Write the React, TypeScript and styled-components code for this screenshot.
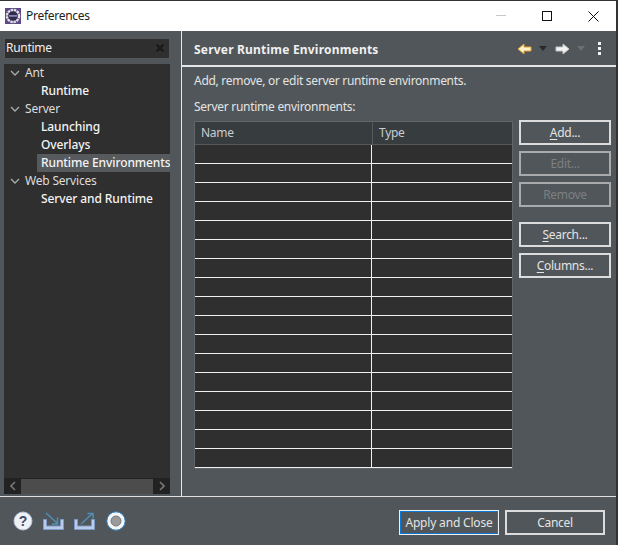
import React from "react";
import styled, { createGlobalStyle } from "styled-components";

const Global = createGlobalStyle`
  html, body { margin: 0; padding: 0; background: #2b2b2b; }
  #root { width: 618px; height: 545px; overflow: hidden; }
  * { box-sizing: border-box; }
`;

const Win = styled.div`
  width: 618px; height: 545px; display: flex; flex-direction: column;
  background: #505659; color: #eeeeee;
  border-top: 1px solid #333; border-right: 2px solid #333;
  font: 12px/16px "Noto Sans", "Open Sans", sans-serif;
  letter-spacing: -0.28px;
`;
const TitleBar = styled.div`
  height: 30px; flex: none; background: #fff; color: #222; display: flex; align-items: center;
  padding-left: 5px; font-size: 12px;
`;
const AppIcon = styled.svg` width: 16px; height: 16px; margin-right: 5px; `;
const TitleText = styled.span` flex: 1; `;
const WinBtn = styled.div` width: 46px; height: 30px; display: flex; align-items: center; justify-content: center; `;
const Main = styled.div` flex: 1; display: flex; min-height: 0; `;
const Left = styled.div`
  width: 181px; flex: none; padding: 7px 11px 0 4px; display: flex; flex-direction: column; gap: 5px;
`;
const Search = styled.div`
  height: 21px; flex: none; background: #2f2f2f; border: 1px solid #55595c; display: flex; align-items: center;
  justify-content: space-between; padding: 0 5px 2px 1px; font-size: 12px; color: #eee;
`;
const Tree = styled.div`
  flex: 1; background: #2f2f2f; display: flex; flex-direction: column; min-height: 0; margin-bottom: 2px;
`;
const TreeList = styled.div` flex: 1; `;
const Row = styled.div<{ $child?: boolean }>`
  height: 18px; line-height: 17px; display: flex; align-items: center; white-space: nowrap; overflow: hidden;
  padding-left: ${p => (p.$child ? 33 : 6)}px;
  color: ${p => (p.$child ? "#f4f4f4" : "#dddddd")};
  font-weight: ${p => (p.$child ? 500 : 400)};
  letter-spacing: ${p => (p.$child ? "-0.1px" : "-0.2px")};
`;
const TopLabel = styled.span` height: 18px; line-height: 17px; `;
const Label = styled.span<{ $sel?: boolean }>`
  flex: 1; padding-left: 4px; height: 18px; line-height: 17px;
  background: ${p => (p.$sel ? "#565a5c" : "transparent")};
`;
const Chevron = styled.svg` width: 10px; height: 8px; margin-right: 5px; flex: none; `;
const HScroll = styled.div` height: 16px; flex: none; background: #222; display: flex; align-items: center; `;
const ScrollEnd = styled.div` width: 17px; height: 16px; display: flex; align-items: center; justify-content: center; flex: none; `;
const ScrollThumb = styled.div` flex: 1; height: 15px; background: #4c4c4c; `;

const Right = styled.div`
  flex: 1; border-left: 1px solid #e6e6e6; display: flex; flex-direction: column; min-width: 0;
`;
const Header = styled.div`
  height: 36px; flex: none; border-bottom: 2px solid #e6e6e6; display: flex; align-items: center;
  padding-left: 12px;
`;
const HeaderTitle = styled.span` flex: 1; font-weight: 700; font-size: 12px; color: #f0f0f0; letter-spacing: 0.2px; padding-top: 3px; `;
const Tools = styled.div` display: flex; align-items: center; padding-right: 14px; padding-top: 1px; `;
const Dots = styled.svg` margin-left: 5px; `;
const Content = styled.div` flex: 1; padding: 6px 5px 0 12px; min-height: 0; `;
const Line = styled.div` height: 16px; color: #e4e4e4; margin-bottom: 10px; `;
const Line2 = styled(Line)` margin-bottom: 6px; `;
const Body = styled.div` display: flex; gap: 6px; align-items: flex-start; `;

const Table = styled.div`
  width: 319px; height: 348px; border: 1px solid #626669; background: #2f2f2f; display: flex; flex-direction: column;
`;
const Head = styled.div`
  height: 23px; flex: none; background: #373c3f; display: grid; grid-template-columns: 177px 1fr;
  border-bottom: 1px solid #55595c;
`;
const HeadCell = styled.div`
  padding: 3px 0 0 6px; color: #c9cdd0; & + & { border-left: 1px solid #55595c; }
`;
const TRow = styled.div`
  height: 19px; flex: none; display: grid; grid-template-columns: 176px 1fr; border-bottom: 1px solid #f0f0f0;
`;
const TCell = styled.div` & + & { border-left: 1px solid #f0f0f0; } `;

const Buttons = styled.div` width: 92px; flex: none; display: flex; flex-direction: column; gap: 6px; margin-top: -1px; `;
const Btn = styled.div<{ $off?: boolean; $gap?: boolean; $def?: boolean; $w?: number }>`
  height: 25px; width: ${p => (p.$w ? `${p.$w}px` : "auto")}; display: flex; align-items: center; justify-content: center;
  border: 2px solid ${p => (p.$off ? "#a8aaab" : "#dcdcdc")};
  color: ${p => (p.$off ? "#7d8184" : "#e4e4e4")};
  margin-top: ${p => (p.$gap ? 9 : 0)}px;
  ${p => p.$def && "border: 1px solid #f0f0f0; box-shadow: inset 0 0 0 1px #0a78d4; letter-spacing: -0.18px;"}
`;
const U = styled.span` text-decoration: underline; text-underline-offset: 2px; `;

const Footer = styled.div`
  height: 49px; flex: none; border-top: 1px solid #e0e0e0; display: flex; align-items: center; padding: 3px 11px 0 13px; gap: 6px;
`;
const FootIcons = styled.div` flex: 1; display: flex; align-items: center; gap: 9px; padding-bottom: 3px; `;
const HelpIcon = styled.svg` margin-right: 1px; `;
const StopIcon = styled.svg` margin-left: 1px; `;

const Chev = () => (
  <Chevron viewBox="0 0 10 8"><path d="M1 2l4 4 4-4" fill="none" stroke="#a8acae" strokeWidth="1.3" /></Chevron>
);
const DropSvg = styled.svg` margin: 0 8px 0 7px; `;
const Drop = ({ c }: { c: string }) => (
  <DropSvg width="8" height="5" viewBox="0 0 8 5"><path d="M0 0h8L4 5z" fill={c} /></DropSvg>
);
const Arrow = ({ left, fill, stroke }: { left?: boolean; fill: string; stroke: string }) => (
  <svg width="15" height="12" viewBox="0 0 15 12">
    <path d={left ? "M1 6l6-5v3h7v4H7v3z" : "M14 6L8 1v3H1v4h7v3z"} fill={fill} stroke={stroke} strokeWidth="1" />
  </svg>
);
const Transfer = ({ out }: { out?: boolean }) => (
  <svg width="22" height="19" viewBox="0 0 22 19">
    <path d="M.5 7.5v10h20v-10h-3v6.5h-14V7.5z" fill="#b9cbe8" stroke="#7f9cc8" strokeWidth="1" />
    {out
      ? <path d="M7 12L18 2M13.5 1.5h5.5v5" fill="none" stroke="#4f8fb5" strokeWidth="1.5" />
      : <path d="M3 1l11 10M14.5 5.5v6.5H9" fill="none" stroke="#4f8fb5" strokeWidth="1.5" />}
  </svg>
);

const rows = Array.from({ length: 17 });

export default function App() {
  return (
    <Win>
      <Global />
      <TitleBar>
        <AppIcon viewBox="0 0 16 16">
          <rect width="16" height="16" fill="#5c4a86" />
          <circle cx="8" cy="8" r="6" fill="none" stroke="#e4e4e4" strokeWidth="2.4" strokeDasharray="2.4 .75" />
          <circle cx="8" cy="8" r="4.6" fill="#2f2b4a" />
          <rect x="4" y="7.2" width="8" height="1.4" fill="#a898d0" />
        </AppIcon>
        <TitleText>Preferences</TitleText>
        <WinBtn>
          <svg width="10" height="2" viewBox="0 0 10 2"><rect width="10" height="1" fill="#c8c8c8" /></svg>
        </WinBtn>
        <WinBtn>
          <svg width="10" height="10" viewBox="0 0 10 10"><rect x=".5" y=".5" width="9" height="9" fill="none" stroke="#111" /></svg>
        </WinBtn>
        <WinBtn>
          <svg width="11" height="11" viewBox="0 0 11 11"><path d="M.5.5l10 10M10.5.5l-10 10" stroke="#111" fill="none" /></svg>
        </WinBtn>
      </TitleBar>
      <Main>
        <Left>
          <Search>
            <span>Runtime</span>
            <svg width="8" height="8" viewBox="0 0 8 8"><path d="M.5.5l7 7M7.5.5l-7 7" stroke="#151515" strokeWidth="1.8" /></svg>
          </Search>
          <Tree>
            <TreeList>
              <Row><Chev /><TopLabel>Ant</TopLabel></Row>
              <Row $child><Label>Runtime</Label></Row>
              <Row><Chev /><TopLabel>Server</TopLabel></Row>
              <Row $child><Label>Launching</Label></Row>
              <Row $child><Label>Overlays</Label></Row>
              <Row $child><Label $sel>Runtime Environments</Label></Row>
              <Row><Chev /><TopLabel>Web Services</TopLabel></Row>
              <Row $child><Label>Server and Runtime</Label></Row>
            </TreeList>
            <HScroll>
              <ScrollEnd>
                <svg width="6" height="10" viewBox="0 0 6 10"><path d="M5 1L1 5l4 4" fill="none" stroke="#777" strokeWidth="1.6" /></svg>
              </ScrollEnd>
              <ScrollThumb />
              <ScrollEnd>
                <svg width="6" height="10" viewBox="0 0 6 10"><path d="M1 1l4 4-4 4" fill="none" stroke="#777" strokeWidth="1.6" /></svg>
              </ScrollEnd>
            </HScroll>
          </Tree>
        </Left>
        <Right>
          <Header>
            <HeaderTitle>Server Runtime Environments</HeaderTitle>
            <Tools>
              <Arrow left fill="#fff3d0" stroke="#e0a030" />
              <Drop c="#2a2a2a" />
              <Arrow fill="#f4f4f4" stroke="#c8c8c8" />
              <Drop c="#6b6f72" />
              <Dots width="4" height="14" viewBox="0 0 4 14">
                <rect x="0" y="0" width="3" height="3" fill="#f4f4f4" /><rect x="0" y="5" width="3" height="3" fill="#f4f4f4" /><rect x="0" y="10" width="3" height="3" fill="#f4f4f4" />
              </Dots>
            </Tools>
          </Header>
          <Content>
            <Line>Add, remove, or edit server runtime environments.</Line>
            <Line2>Server runtime environments:</Line2>
            <Body>
              <Table>
                <Head><HeadCell>Name</HeadCell><HeadCell>Type</HeadCell></Head>
                {rows.map((_, i) => (
                  <TRow key={i}><TCell /><TCell /></TRow>
                ))}
              </Table>
              <Buttons>
                <Btn><span><U>A</U>dd...</span></Btn>
                <Btn $off>Edit...</Btn>
                <Btn $off>Remove</Btn>
                <Btn $gap><span><U>S</U>earch...</span></Btn>
                <Btn><span><U>C</U>olumns...</span></Btn>
              </Buttons>
            </Body>
          </Content>
        </Right>
      </Main>
      <Footer>
        <FootIcons>
          <HelpIcon width="20" height="20" viewBox="0 0 20 20">
            <circle cx="10" cy="10" r="9" fill="#eef1f6" stroke="#b8c4d8" />
            <text x="10" y="15" textAnchor="middle" fontFamily="Liberation Sans" fontWeight="700" fontSize="14" fill="#3d4a6a">?</text>
          </HelpIcon>
          <Transfer />
          <Transfer out />
          <StopIcon width="20" height="20" viewBox="0 0 20 20">
            <circle cx="10" cy="10" r="9.2" fill="#f4f6f8" stroke="#2f7fc0" />
            <circle cx="10" cy="10" r="5" fill="#9a9a9a" stroke="#777" />
          </StopIcon>
        </FootIcons>
        <Btn $def $w={100}>Apply and Close</Btn>
        <Btn $w={100}>Cancel</Btn>
      </Footer>
    </Win>
  );
}
